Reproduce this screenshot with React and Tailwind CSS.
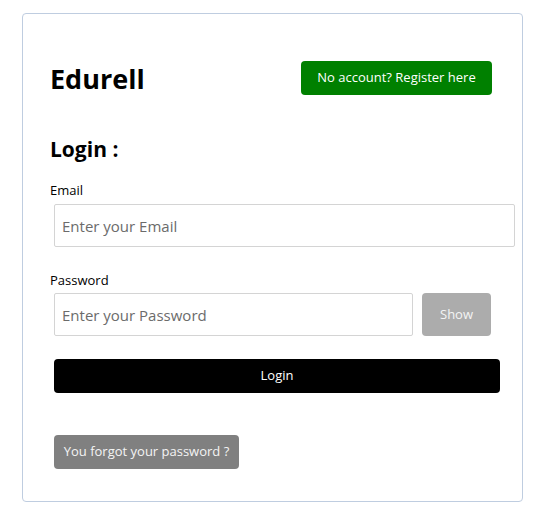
import React from 'react';

export default function App() {
    return (
        <div className="w-[549px] h-[525px] bg-white pt-[13px] pl-[22px]" style={{ fontFamily: '"Open Sans", "Noto Sans", sans-serif' }}>
            <div className="w-[501px] h-[489px] border border-[#bfcde0] rounded-[4px] pl-[27px] pt-[47px]">
                {/* entete */}
                <div className="flex items-center justify-between w-[442px]">
                    <h1 className="text-[27px] font-bold text-black leading-none">Edurell</h1>
                    <button className="bg-[#008000] text-white text-[13px] w-[191px] h-[34px] rounded-[4px]">
                        No account? Register here
                    </button>
                </div>

                <h2 className="mt-[44px] text-[21px] font-bold text-black leading-none">Login :</h2>

                <label className="block mt-[24px] text-[13px] text-black leading-none">Email</label>
                <input
                    className="block mt-[7px] ml-[4px] w-[461px] h-[43px] border border-[#d4d4d4] rounded-[2px] px-[7px] text-[15px] placeholder:text-[#6b6b6b] outline-none"
                    placeholder="Enter your Email"
                />

                <label className="block mt-[27px] text-[13px] text-black leading-none">Password</label>
                <div className="flex items-center mt-[6px] ml-[4px] gap-[9px]">
                    <input
                        className="w-[359px] h-[43px] border border-[#d4d4d4] rounded-[2px] px-[7px] text-[15px] placeholder:text-[#6b6b6b] outline-none"
                        placeholder="Enter your Password"
                    />
                    <button className="w-[69px] h-[43px] bg-[#acacac] text-[#f4f4f4] text-[13px] rounded-[4px]">Show</button>
                </div>

                <button className="block mt-[23px] ml-[4px] w-[446px] h-[34px] bg-black text-white text-[13px] rounded-[4px]">
                    Login
                </button>

                <button className="block mt-[42px] ml-[4px] w-[185px] h-[34px] bg-[#808080] text-[#f4f4f4] text-[13px] rounded-[4px]">
                    You forgot your password ?
                </button>
            </div>
        </div>
    );
}
